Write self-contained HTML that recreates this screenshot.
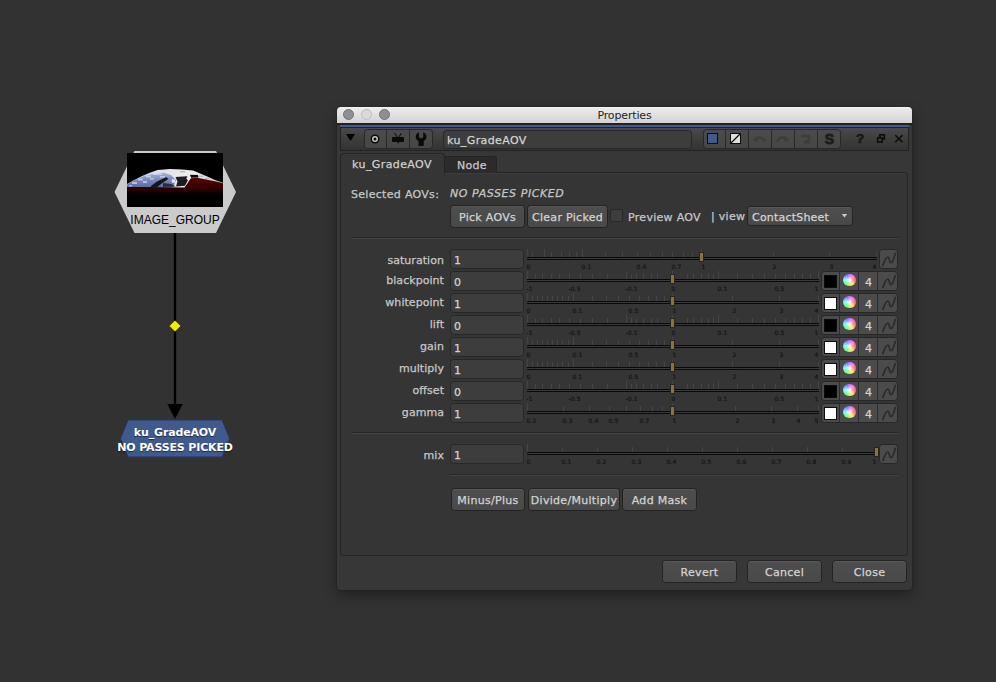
<!DOCTYPE html><html><head><meta charset="utf-8"><title>Properties</title><style>
html,body{margin:0;padding:0;}
body{width:996px;height:682px;background:#323232;overflow:hidden;position:relative;font-family:"DejaVu Sans","Liberation Sans",sans-serif;font-size:11px;letter-spacing:0.3px;color:#c8c8c8;-webkit-text-stroke:0.25px;}
.a{position:absolute;box-sizing:border-box;}
.t{position:absolute;white-space:nowrap;line-height:14px;}
.btn{position:absolute;box-sizing:border-box;background:linear-gradient(#4e4e4e,#494949);border:1px solid #232323;border-radius:3.5px;box-shadow:inset 0 1px 0 #585858;text-align:center;line-height:23px;color:#d4d4d4;white-space:nowrap;}
.fld{position:absolute;box-sizing:border-box;background:#3d3d3d;border:1px solid #272727;border-radius:3.5px;}
.sep{position:absolute;height:1px;background:#454545;border-top:1px solid #262626;box-sizing:content-box;}
.tk{position:absolute;width:1px;background:#454545;}
.tl{position:absolute;font-size:6px;line-height:8px;letter-spacing:0.15px;margin-left:-0.5px;color:#121212;-webkit-text-stroke:0.15px;white-space:nowrap;}
.ib{position:absolute;box-sizing:border-box;background:#4b4b4b;border:1px solid #272727;}
</style></head><body>
<svg class="a" style="left:100px;top:140px" width="160" height="300" viewBox="100 140 160 300">
<polygon points="114.5,192 134.5,151 216,151 236,192 216,233 134.5,233" fill="#cbcbcb"/>
<rect x="127" y="153" width="96" height="54" fill="#000"/>
<defs><linearGradient id="dome" x1="0" y1="0" x2="1" y2="0"><stop offset="0" stop-color="#aab4d4"/><stop offset="0.3" stop-color="#dfe2ea"/><stop offset="0.7" stop-color="#ececec"/><stop offset="1" stop-color="#c9c0c0"/></linearGradient><linearGradient id="blu" x1="0" y1="0" x2="0" y2="1"><stop offset="0" stop-color="#a9b5da"/><stop offset="0.5" stop-color="#7888bf"/><stop offset="1" stop-color="#5a6aa2"/></linearGradient><linearGradient id="red" x1="0" y1="0" x2="0" y2="1"><stop offset="0" stop-color="#540303"/><stop offset="0.5" stop-color="#3e0000"/><stop offset="0.85" stop-color="#200000"/><stop offset="1" stop-color="#000"/></linearGradient></defs>
<path d="M127,184 L133.3,180.4 L142,176 L149.8,172.7 L157.6,170 L169.7,169 L181.9,169.4 L193,170.5 L199.6,173.3 L207.3,176.6 L215,179.9 L223,182.7 L223,188 L127,188 Z" fill="url(#dome)"/>
<path d="M127,184.5 L134,180.7 L142,177 L152,174 L163,172.5 L171,175 L176,180 L173,187.5 L127,187.5 Z" fill="url(#blu)"/>
<path d="M138,178.5 h5 v2 h-5 z M146,175.5 h5 v2 h-5 z M132,182 h5 v2 h-5 z M153,173 h9 v2 h-9 z M143,181 h4 v2 h-4 z M150,178 h4 v1.5 h-4 z M160,176 h5 v1.5 h-5 z M129,185 h3 v1.5 h-3 z" fill="#e3e7f5" opacity="0.6"/>
<path d="M190,174.8 L198,175 L198.5,177.4 L191,177.8 Z" fill="#0a0a0c"/>
<path d="M199,175.5 h4 v1.5 h-4 z M205,178 h4 v1.2 h-4 z M180,171 h5 v1.5 h-5 z" fill="#a9a9b0" opacity="0.7"/>
<path d="M127,187 L150,187 L184.5,187.5 L187,184 L190.7,178.2 L197.3,177.7 L208.4,179.9 L216,181.5 L223,183.2 L223,193.5 L127,193.5 Z" fill="url(#red)"/>
<path d="M151,186 L157,181.5 L166,177.3 L168.5,178.8 L161,184 L157,187.3 L151,187.3 Z" fill="#14151b"/>
<path d="M175.5,177 L187,176.3 L188.3,179.5 L185,185.8 L176,186.4 L177.5,181.5 Z" fill="#1b1b20"/>
<path d="M163,183 L171,184 L176,186.5 L163,187 Z" fill="#2a2c3a"/>
<rect x="171.8" y="179.3" width="3.4" height="3.4" fill="#dfe6ff"/>
<path d="M186,178 L189,176.8 L191,177.2 L188.5,181 Z" fill="#f4f4f4"/>
<rect x="173.850" y="233" width="2.3" height="172" fill="#000"/>
<polygon points="167.3,404 182.7,404 175,419" fill="#000"/>
<polygon points="175,320.5 180.5,326 175,331.5 169.5,326" fill="#f2ec00"/>
</svg>
<div class="t" style="left:115px;width:120px;top:213px;text-align:center;font-family:'Liberation Sans',sans-serif;font-size:12px;letter-spacing:0;-webkit-text-stroke:0;color:#000;">IMAGE_GROUP</div>
<svg class="a" style="left:110px;top:415px" width="130" height="48" viewBox="110 415 130 48">
<polygon points="120.5,438.5 128,420 222,420 229.5,438.5 222,457 128,457" fill="#3f5a8d" stroke="#26375a" stroke-width="1"/>
</svg>
<div class="t" style="left:95px;width:160px;top:425px;text-align:center;font-weight:bold;color:#fff;font-size:11px;line-height:15px;letter-spacing:-0.15px;-webkit-text-stroke:0;text-shadow:0 1px 1px rgba(0,0,0,.55)">ku_GradeAOV<br>NO PASSES PICKED</div>
<div class="a" style="left:337px;top:107px;width:575px;height:483px;background:#373737;border-radius:4px;box-shadow:0 5px 13px rgba(0,0,0,.36),0 0 2px rgba(0,0,0,.35);"></div>
<div class="a" style="left:337px;top:107px;width:575px;height:16px;background:linear-gradient(#f7f7f7 0,#ebebeb 1.5px,#d3d3d3);border-radius:4px 4px 0 0;"></div>
<div class="a" style="left:343.0px;top:109px;width:11px;height:11px;border-radius:50%;background:#8e8e93;border:1px solid #727277;"></div>
<div class="a" style="left:361.0px;top:109px;width:11px;height:11px;border-radius:50%;background:#dadada;border:1px solid #bebebe;"></div>
<div class="a" style="left:379.0px;top:109px;width:11px;height:11px;border-radius:50%;background:#8e8e93;border:1px solid #727277;"></div>
<div class="t" style="left:337px;top:109px;width:575px;text-align:center;font-size:11px;letter-spacing:-0.15px;-webkit-text-stroke:0;color:#262626;">Properties</div>
<div class="a" style="left:337px;top:123px;width:575px;height:2px;background:#222;"></div>
<div class="a" style="left:340px;top:125px;width:569px;height:2px;background:#3f5b8f;"></div>
<div class="a" style="left:340px;top:127px;width:569px;height:24px;background:linear-gradient(#4a4a4a,#3d3d3d 50%,#333333);border:1px solid #232323;"></div>
<svg class="a" style="left:345px;top:133px" width="12" height="10"><polygon points="1,1 10,1 5.5,8" fill="#000"/></svg>
<div class="ib" style="left:364px;top:129px;width:69px;height:20px;border-radius:3.500px;background:linear-gradient(#4b4b4b,#464646);"></div>
<div class="a" style="left:386px;top:130px;width:1px;height:18px;background:#292929;"></div>
<div class="a" style="left:409px;top:130px;width:1px;height:18px;background:#292929;"></div>
<svg class="a" style="left:364px;top:129px" width="69" height="20"><circle cx="11" cy="10" r="4.5" fill="#0a0a0a"/><circle cx="11" cy="10" r="3" fill="#c6c6c6"/><circle cx="11" cy="10" r="1.5" fill="#0a0a0a"/><rect x="28" y="8" width="12" height="5" rx="1" fill="#0a0a0a"/><path d="M30.5,4 L33.5,8.5 M37.5,4 L34.5,8.5" stroke="#0a0a0a" stroke-width="1"/><path d="M33,13 h2.5 l-1.2,1.5 z" fill="#0a0a0a"/><path d="M55,3.2 C50.8,4.8 50.8,10.5 54.5,12 L54.5,17 L59.7,17 L59.7,12 C63.4,10.5 63.4,4.8 59.2,3.2 L59.2,8 L58.3,9.3 L55.9,9.3 L55,8 Z" fill="#0a0a0a"/></svg>
<div class="fld" style="left:443px;top:130px;width:249px;height:19px;"></div>
<div class="t" style="left:447px;top:134px;color:#d4d4d4;letter-spacing:0.4px;">ku_GradeAOV</div>
<div class="ib" style="left:703px;top:129px;width:138px;height:20px;border-radius:3.500px;background:linear-gradient(#4b4b4b,#464646);"></div>
<div class="a" style="left:725px;top:130px;width:1px;height:18px;background:#292929;"></div>
<div class="a" style="left:748px;top:130px;width:1px;height:18px;background:#292929;"></div>
<div class="a" style="left:771px;top:130px;width:1px;height:18px;background:#292929;"></div>
<div class="a" style="left:794px;top:130px;width:1px;height:18px;background:#292929;"></div>
<div class="a" style="left:817px;top:130px;width:1px;height:18px;background:#292929;"></div>
<div class="a" style="left:707px;top:133px;width:11px;height:11px;background:#415a8c;border:1px solid #0c0c0c;"></div>
<svg class="a" style="left:729px;top:132px" width="14" height="14"><rect x="1.5" y="1.5" width="10" height="10" fill="#dedede" stroke="#0c0c0c"/><path d="M2,11 L11,2" stroke="#0c0c0c" stroke-width="1.2"/></svg>
<svg class="a" style="left:748px;top:129px" width="69" height="20" fill="none" stroke="#3d3d3d" stroke-width="2.4"><path d="M7,10.5 C10,7.5 14,7.5 17,12.5" /><path d="M4.5,11 l5,-4 l0,6 z" fill="#3d3d3d" stroke="none"/><path d="M39,10.5 C36,7.5 32,7.5 29,12.5" /><path d="M41.5,11 l-5,-4 l0,6 z" fill="#3d3d3d" stroke="none"/><path d="M53,7 h8 v6 h-3" /><path d="M55,13 l4,-3 l0,6 z" fill="#3d3d3d" stroke="none"/></svg>
<div class="t" style="left:818px;width:23px;top:131px;text-align:center;font-weight:bold;font-size:14px;line-height:16px;letter-spacing:0;color:#1c1c1c;font-family:'Liberation Sans',sans-serif;-webkit-text-stroke:0.9px #1c1c1c;">S</div>
<div class="t" style="left:852px;width:16px;top:131px;text-align:center;font-weight:bold;font-size:13.5px;line-height:16px;letter-spacing:0;color:#181818;font-family:'Liberation Sans',sans-serif;-webkit-text-stroke:0.7px #181818;">?</div>
<svg class="a" style="left:876px;top:133px" width="11" height="11" fill="none" stroke="#0a0a0a" stroke-width="1.5"><rect x="3.9" y="1.8" width="4.5" height="4.2"/><rect x="1.6" y="4.8" width="4.5" height="4.2" fill="#3f3f3f"/></svg>
<svg class="a" style="left:894px;top:134px" width="10" height="10" stroke="#0a0a0a" stroke-width="1.450"><path d="M1.3,1.3 L8.5,8.3 M8.5,1.3 L1.3,8.3"/></svg>
<div class="a" style="left:340px;top:172px;width:568px;height:384px;border:1px solid #242424;border-radius:0 3px 3px 3px;background:#353535;box-shadow:inset 0 1px 0 #3c3c3c;"></div>
<div class="a" style="left:444px;top:156px;width:53px;height:17px;background:#2b2b2b;border:1px solid #242424;border-bottom:none;border-radius:3px 3px 0 0;"></div>
<div class="t" style="left:446px;top:159px;width:52px;text-align:center;color:#c8c8c8;">Node</div>
<div class="a" style="left:340px;top:153px;width:105px;height:21px;background:#353535;border:1px solid #242424;border-bottom:none;border-radius:4px 4px 0 0;box-shadow:inset 0 1px 0 #3c3c3c;"></div>
<div class="t" style="left:340px;top:158px;width:104px;text-align:center;color:#d0d0d0;letter-spacing:0.4px;">ku_GradeAOV</div>
<div class="t" style="left:351px;top:188px;">Selected AOVs:</div>
<div class="t" style="left:450px;top:187px;font-style:italic;letter-spacing:0.57px;">NO PASSES PICKED</div>
<div class="btn" style="left:450px;top:205px;width:75px;height:23px;">Pick AOVs</div>
<div class="btn" style="left:527px;top:205px;width:81px;height:23px;">Clear Picked</div>
<div class="a" style="left:610px;top:209px;width:13px;height:13px;background:#3d3d3d;border:1px solid #282828;border-radius:2px;"></div>
<div class="t" style="left:628px;top:211px;">Preview AOV</div>
<div class="t" style="left:711px;top:210px;">| view</div>
<div class="btn" style="left:747px;top:206px;width:106px;height:20px;"></div>
<div class="t" style="left:752px;top:210.5px;color:#d4d4d4;letter-spacing:0.2px;">ContactSheet</div>
<svg class="a" style="left:841px;top:213px" width="8" height="6"><polygon points="0.8,1 6.2,1 3.5,4.6" fill="#cccccc"/></svg>
<div class="sep" style="left:351px;top:237px;width:547px;"></div>
<div class="sep" style="left:351px;top:432px;width:547px;"></div>
<div class="sep" style="left:450px;top:474px;width:448px;"></div>
<div class="t" style="left:351px;top:254px;width:93px;text-align:right;letter-spacing:0.05px;">saturation</div>
<div class="fld" style="left:450px;top:249px;width:74px;height:20px;"></div>
<div class="t" style="left:454px;top:254px;color:#d4d4d4;">1</div>
<div class="a" style="left:527px;top:257px;width:350px;height:3px;background:#3a3a3a;border-top:1px solid #090909;border-bottom:1px solid #090909;"></div>
<div class="tk" style="left:527px;top:249px;height:8px;"></div>
<div class="tk" style="left:532px;top:252px;height:5px;"></div>
<div class="tk" style="left:544px;top:249px;height:8px;"></div>
<div class="tk" style="left:551px;top:252px;height:5px;"></div>
<div class="tk" style="left:561px;top:252px;height:5px;"></div>
<div class="tk" style="left:569px;top:252px;height:5px;"></div>
<div class="tk" style="left:576px;top:252px;height:5px;"></div>
<div class="tk" style="left:582px;top:249px;height:8px;"></div>
<div class="tk" style="left:605px;top:252px;height:5px;"></div>
<div class="tk" style="left:622px;top:252px;height:5px;"></div>
<div class="tk" style="left:637px;top:252px;height:5px;"></div>
<div class="tk" style="left:650px;top:252px;height:5px;"></div>
<div class="tk" style="left:662px;top:252px;height:5px;"></div>
<div class="tk" style="left:672px;top:252px;height:5px;"></div>
<div class="tk" style="left:683px;top:252px;height:5px;"></div>
<div class="tk" style="left:692px;top:252px;height:5px;"></div>
<div class="tk" style="left:701px;top:249px;height:8px;"></div>
<div class="tk" style="left:773px;top:252px;height:5px;"></div>
<div class="tk" style="left:829px;top:252px;height:5px;"></div>
<div class="tk" style="left:876px;top:252px;height:5px;"></div>
<div class="tl" style="left:527px;top:263px;">0</div>
<div class="tl" style="left:582px;top:263px;">0.1</div>
<div class="tl" style="left:637px;top:263px;">0.4</div>
<div class="tl" style="left:672px;top:263px;">0.7</div>
<div class="tl" style="left:702px;top:263px;">1</div>
<div class="tl" style="left:773px;top:263px;">2</div>
<div class="tl" style="left:830px;top:263px;">3</div>
<div class="tl" style="left:857px;width:20px;text-align:right;top:263px;">4</div>
<div class="a" style="left:699px;top:252px;width:5px;height:10px;background:#88723d;border:1px solid #2a2519;"></div>
<div class="ib" style="left:879px;top:249px;width:19px;height:20px;border-radius:3.500px;"></div>
<svg class="a" style="left:879px;top:249px" width="20" height="21" fill="none" stroke="#2a2a2a" stroke-width="1.7" stroke-linecap="round"><path d="M3.8,16.6 C5.2,13.5 6.6,8 8.8,8 C11,8 9.8,13.6 12,13.6 C14.2,13.6 15.4,7 16.3,4.5"/></svg>
<div class="t" style="left:351px;top:273.5px;width:93px;text-align:right;letter-spacing:0.05px;">blackpoint</div>
<div class="fld" style="left:450px;top:271px;width:74px;height:20px;"></div>
<div class="t" style="left:454px;top:276px;color:#d4d4d4;">0</div>
<div class="a" style="left:527px;top:279px;width:292px;height:3px;background:#3a3a3a;border-top:1px solid #090909;border-bottom:1px solid #090909;"></div>
<div class="tk" style="left:527px;top:271px;height:8px;"></div>
<div class="tk" style="left:535px;top:274px;height:5px;"></div>
<div class="tk" style="left:542px;top:274px;height:5px;"></div>
<div class="tk" style="left:551px;top:274px;height:5px;"></div>
<div class="tk" style="left:559px;top:274px;height:5px;"></div>
<div class="tk" style="left:569px;top:274px;height:5px;"></div>
<div class="tk" style="left:580px;top:274px;height:5px;"></div>
<div class="tk" style="left:592px;top:274px;height:5px;"></div>
<div class="tk" style="left:607px;top:274px;height:5px;"></div>
<div class="tk" style="left:626px;top:271px;height:8px;"></div>
<div class="tk" style="left:631px;top:274px;height:5px;"></div>
<div class="tk" style="left:636px;top:274px;height:5px;"></div>
<div class="tk" style="left:643px;top:274px;height:5px;"></div>
<div class="tk" style="left:651px;top:274px;height:5px;"></div>
<div class="tk" style="left:657px;top:274px;height:5px;"></div>
<div class="tk" style="left:672px;top:271px;height:8px;"></div>
<div class="tk" style="left:687px;top:274px;height:5px;"></div>
<div class="tk" style="left:693px;top:274px;height:5px;"></div>
<div class="tk" style="left:701px;top:274px;height:5px;"></div>
<div class="tk" style="left:708px;top:274px;height:5px;"></div>
<div class="tk" style="left:713px;top:274px;height:5px;"></div>
<div class="tk" style="left:718px;top:271px;height:8px;"></div>
<div class="tk" style="left:737px;top:274px;height:5px;"></div>
<div class="tk" style="left:752px;top:274px;height:5px;"></div>
<div class="tk" style="left:764px;top:274px;height:5px;"></div>
<div class="tk" style="left:775px;top:274px;height:5px;"></div>
<div class="tk" style="left:785px;top:274px;height:5px;"></div>
<div class="tk" style="left:794px;top:274px;height:5px;"></div>
<div class="tk" style="left:802px;top:274px;height:5px;"></div>
<div class="tk" style="left:810px;top:274px;height:5px;"></div>
<div class="tk" style="left:818px;top:271px;height:8px;"></div>
<div class="tl" style="left:527px;top:285px;">-1</div>
<div class="tl" style="left:569px;top:285px;">-0.5</div>
<div class="tl" style="left:626px;top:285px;">-0.1</div>
<div class="tl" style="left:672px;top:285px;">0</div>
<div class="tl" style="left:718px;top:285px;">0.1</div>
<div class="tl" style="left:775px;top:285px;">0.5</div>
<div class="tl" style="left:799px;width:20px;text-align:right;top:285px;">1</div>
<div class="a" style="left:670px;top:274px;width:5px;height:10px;background:#88723d;border:1px solid #2a2519;"></div>
<div class="ib" style="left:821px;top:271px;width:77px;height:20px;border-radius:3.500px;"></div>
<div class="a" style="left:839px;top:272px;width:1px;height:18px;background:#2c2c2c;"></div>
<div class="a" style="left:858px;top:272px;width:1px;height:18px;background:#2c2c2c;"></div>
<div class="a" style="left:877px;top:272px;width:1px;height:18px;background:#2c2c2c;"></div>
<div class="a" style="left:824px;top:275px;width:13px;height:13px;background:#000;border:1px solid #0c0c0c;"></div>
<div class="a" style="left:843.4px;top:274.2px;width:12.2px;height:12.2px;border-radius:50%;background:radial-gradient(circle at 50% 50%,#fff 0%,rgba(255,255,255,0.42) 45%,rgba(255,255,255,0) 100%),conic-gradient(from 90deg,#ff3030,#ffe030,#30ff30,#30ffff,#4040ff,#ff30ff,#ff3030);"></div>
<div class="t" style="left:859px;top:276px;width:19px;text-align:center;font-size:11px;letter-spacing:0;color:#d4d4d4;">4</div>
<svg class="a" style="left:879px;top:271px" width="20" height="21" fill="none" stroke="#2a2a2a" stroke-width="1.7" stroke-linecap="round"><path d="M3.8,16.6 C5.2,13.5 6.6,8 8.8,8 C11,8 9.8,13.6 12,13.6 C14.2,13.6 15.4,7 16.3,4.5"/></svg>
<div class="t" style="left:351px;top:295.5px;width:93px;text-align:right;letter-spacing:0.05px;">whitepoint</div>
<div class="fld" style="left:450px;top:293px;width:74px;height:20px;"></div>
<div class="t" style="left:454px;top:298px;color:#d4d4d4;">1</div>
<div class="a" style="left:527px;top:301px;width:292px;height:3px;background:#3a3a3a;border-top:1px solid #090909;border-bottom:1px solid #090909;"></div>
<div class="tk" style="left:527px;top:293px;height:8px;"></div>
<div class="tk" style="left:532px;top:296px;height:5px;"></div>
<div class="tk" style="left:537px;top:296px;height:5px;"></div>
<div class="tk" style="left:542px;top:296px;height:5px;"></div>
<div class="tk" style="left:547px;top:296px;height:5px;"></div>
<div class="tk" style="left:552px;top:296px;height:5px;"></div>
<div class="tk" style="left:557px;top:296px;height:5px;"></div>
<div class="tk" style="left:562px;top:296px;height:5px;"></div>
<div class="tk" style="left:568px;top:296px;height:5px;"></div>
<div class="tk" style="left:573px;top:293px;height:8px;"></div>
<div class="tk" style="left:592px;top:296px;height:5px;"></div>
<div class="tk" style="left:606px;top:296px;height:5px;"></div>
<div class="tk" style="left:618px;top:296px;height:5px;"></div>
<div class="tk" style="left:629px;top:296px;height:5px;"></div>
<div class="tk" style="left:639px;top:296px;height:5px;"></div>
<div class="tk" style="left:648px;top:296px;height:5px;"></div>
<div class="tk" style="left:656px;top:296px;height:5px;"></div>
<div class="tk" style="left:664px;top:296px;height:5px;"></div>
<div class="tk" style="left:672px;top:293px;height:8px;"></div>
<div class="tk" style="left:732px;top:296px;height:5px;"></div>
<div class="tk" style="left:779px;top:296px;height:5px;"></div>
<div class="tk" style="left:818px;top:296px;height:5px;"></div>
<div class="tl" style="left:527px;top:307px;">0</div>
<div class="tl" style="left:573px;top:307px;">0.1</div>
<div class="tl" style="left:629px;top:307px;">0.5</div>
<div class="tl" style="left:673px;top:307px;">1</div>
<div class="tl" style="left:733px;top:307px;">2</div>
<div class="tl" style="left:780px;top:307px;">3</div>
<div class="tl" style="left:799px;width:20px;text-align:right;top:307px;">4</div>
<div class="a" style="left:670px;top:296px;width:5px;height:10px;background:#88723d;border:1px solid #2a2519;"></div>
<div class="ib" style="left:821px;top:293px;width:77px;height:20px;border-radius:3.500px;"></div>
<div class="a" style="left:839px;top:294px;width:1px;height:18px;background:#2c2c2c;"></div>
<div class="a" style="left:858px;top:294px;width:1px;height:18px;background:#2c2c2c;"></div>
<div class="a" style="left:877px;top:294px;width:1px;height:18px;background:#2c2c2c;"></div>
<div class="a" style="left:824px;top:297px;width:13px;height:13px;background:#fff;border:1px solid #0c0c0c;"></div>
<div class="a" style="left:843.4px;top:296.2px;width:12.2px;height:12.2px;border-radius:50%;background:radial-gradient(circle at 50% 50%,#fff 0%,rgba(255,255,255,0.42) 45%,rgba(255,255,255,0) 100%),conic-gradient(from 90deg,#ff3030,#ffe030,#30ff30,#30ffff,#4040ff,#ff30ff,#ff3030);"></div>
<div class="t" style="left:859px;top:298px;width:19px;text-align:center;font-size:11px;letter-spacing:0;color:#d4d4d4;">4</div>
<svg class="a" style="left:879px;top:293px" width="20" height="21" fill="none" stroke="#2a2a2a" stroke-width="1.7" stroke-linecap="round"><path d="M3.8,16.6 C5.2,13.5 6.6,8 8.8,8 C11,8 9.8,13.6 12,13.6 C14.2,13.6 15.4,7 16.3,4.5"/></svg>
<div class="t" style="left:351px;top:317.5px;width:93px;text-align:right;letter-spacing:0.05px;">lift</div>
<div class="fld" style="left:450px;top:315px;width:74px;height:20px;"></div>
<div class="t" style="left:454px;top:320px;color:#d4d4d4;">0</div>
<div class="a" style="left:527px;top:323px;width:292px;height:3px;background:#3a3a3a;border-top:1px solid #090909;border-bottom:1px solid #090909;"></div>
<div class="tk" style="left:527px;top:315px;height:8px;"></div>
<div class="tk" style="left:535px;top:318px;height:5px;"></div>
<div class="tk" style="left:542px;top:318px;height:5px;"></div>
<div class="tk" style="left:551px;top:318px;height:5px;"></div>
<div class="tk" style="left:559px;top:318px;height:5px;"></div>
<div class="tk" style="left:569px;top:318px;height:5px;"></div>
<div class="tk" style="left:580px;top:318px;height:5px;"></div>
<div class="tk" style="left:592px;top:318px;height:5px;"></div>
<div class="tk" style="left:607px;top:318px;height:5px;"></div>
<div class="tk" style="left:626px;top:315px;height:8px;"></div>
<div class="tk" style="left:631px;top:318px;height:5px;"></div>
<div class="tk" style="left:636px;top:318px;height:5px;"></div>
<div class="tk" style="left:643px;top:318px;height:5px;"></div>
<div class="tk" style="left:651px;top:318px;height:5px;"></div>
<div class="tk" style="left:657px;top:318px;height:5px;"></div>
<div class="tk" style="left:672px;top:315px;height:8px;"></div>
<div class="tk" style="left:687px;top:318px;height:5px;"></div>
<div class="tk" style="left:693px;top:318px;height:5px;"></div>
<div class="tk" style="left:701px;top:318px;height:5px;"></div>
<div class="tk" style="left:708px;top:318px;height:5px;"></div>
<div class="tk" style="left:713px;top:318px;height:5px;"></div>
<div class="tk" style="left:718px;top:315px;height:8px;"></div>
<div class="tk" style="left:737px;top:318px;height:5px;"></div>
<div class="tk" style="left:752px;top:318px;height:5px;"></div>
<div class="tk" style="left:764px;top:318px;height:5px;"></div>
<div class="tk" style="left:775px;top:318px;height:5px;"></div>
<div class="tk" style="left:785px;top:318px;height:5px;"></div>
<div class="tk" style="left:794px;top:318px;height:5px;"></div>
<div class="tk" style="left:802px;top:318px;height:5px;"></div>
<div class="tk" style="left:810px;top:318px;height:5px;"></div>
<div class="tk" style="left:818px;top:315px;height:8px;"></div>
<div class="tl" style="left:527px;top:329px;">-1</div>
<div class="tl" style="left:569px;top:329px;">-0.5</div>
<div class="tl" style="left:626px;top:329px;">-0.1</div>
<div class="tl" style="left:672px;top:329px;">0</div>
<div class="tl" style="left:718px;top:329px;">0.1</div>
<div class="tl" style="left:775px;top:329px;">0.5</div>
<div class="tl" style="left:799px;width:20px;text-align:right;top:329px;">1</div>
<div class="a" style="left:670px;top:318px;width:5px;height:10px;background:#88723d;border:1px solid #2a2519;"></div>
<div class="ib" style="left:821px;top:315px;width:77px;height:20px;border-radius:3.500px;"></div>
<div class="a" style="left:839px;top:316px;width:1px;height:18px;background:#2c2c2c;"></div>
<div class="a" style="left:858px;top:316px;width:1px;height:18px;background:#2c2c2c;"></div>
<div class="a" style="left:877px;top:316px;width:1px;height:18px;background:#2c2c2c;"></div>
<div class="a" style="left:824px;top:319px;width:13px;height:13px;background:#000;border:1px solid #0c0c0c;"></div>
<div class="a" style="left:843.4px;top:318.2px;width:12.2px;height:12.2px;border-radius:50%;background:radial-gradient(circle at 50% 50%,#fff 0%,rgba(255,255,255,0.42) 45%,rgba(255,255,255,0) 100%),conic-gradient(from 90deg,#ff3030,#ffe030,#30ff30,#30ffff,#4040ff,#ff30ff,#ff3030);"></div>
<div class="t" style="left:859px;top:320px;width:19px;text-align:center;font-size:11px;letter-spacing:0;color:#d4d4d4;">4</div>
<svg class="a" style="left:879px;top:315px" width="20" height="21" fill="none" stroke="#2a2a2a" stroke-width="1.7" stroke-linecap="round"><path d="M3.8,16.6 C5.2,13.5 6.6,8 8.8,8 C11,8 9.8,13.6 12,13.6 C14.2,13.6 15.4,7 16.3,4.5"/></svg>
<div class="t" style="left:351px;top:339.5px;width:93px;text-align:right;letter-spacing:0.05px;">gain</div>
<div class="fld" style="left:450px;top:337px;width:74px;height:20px;"></div>
<div class="t" style="left:454px;top:342px;color:#d4d4d4;">1</div>
<div class="a" style="left:527px;top:345px;width:292px;height:3px;background:#3a3a3a;border-top:1px solid #090909;border-bottom:1px solid #090909;"></div>
<div class="tk" style="left:527px;top:337px;height:8px;"></div>
<div class="tk" style="left:532px;top:340px;height:5px;"></div>
<div class="tk" style="left:537px;top:340px;height:5px;"></div>
<div class="tk" style="left:542px;top:340px;height:5px;"></div>
<div class="tk" style="left:547px;top:340px;height:5px;"></div>
<div class="tk" style="left:552px;top:340px;height:5px;"></div>
<div class="tk" style="left:557px;top:340px;height:5px;"></div>
<div class="tk" style="left:562px;top:340px;height:5px;"></div>
<div class="tk" style="left:568px;top:340px;height:5px;"></div>
<div class="tk" style="left:573px;top:337px;height:8px;"></div>
<div class="tk" style="left:592px;top:340px;height:5px;"></div>
<div class="tk" style="left:606px;top:340px;height:5px;"></div>
<div class="tk" style="left:618px;top:340px;height:5px;"></div>
<div class="tk" style="left:629px;top:340px;height:5px;"></div>
<div class="tk" style="left:639px;top:340px;height:5px;"></div>
<div class="tk" style="left:648px;top:340px;height:5px;"></div>
<div class="tk" style="left:656px;top:340px;height:5px;"></div>
<div class="tk" style="left:664px;top:340px;height:5px;"></div>
<div class="tk" style="left:672px;top:337px;height:8px;"></div>
<div class="tk" style="left:732px;top:340px;height:5px;"></div>
<div class="tk" style="left:779px;top:340px;height:5px;"></div>
<div class="tk" style="left:818px;top:340px;height:5px;"></div>
<div class="tl" style="left:527px;top:351px;">0</div>
<div class="tl" style="left:573px;top:351px;">0.1</div>
<div class="tl" style="left:629px;top:351px;">0.5</div>
<div class="tl" style="left:673px;top:351px;">1</div>
<div class="tl" style="left:733px;top:351px;">2</div>
<div class="tl" style="left:780px;top:351px;">3</div>
<div class="tl" style="left:799px;width:20px;text-align:right;top:351px;">4</div>
<div class="a" style="left:670px;top:340px;width:5px;height:10px;background:#88723d;border:1px solid #2a2519;"></div>
<div class="ib" style="left:821px;top:337px;width:77px;height:20px;border-radius:3.500px;"></div>
<div class="a" style="left:839px;top:338px;width:1px;height:18px;background:#2c2c2c;"></div>
<div class="a" style="left:858px;top:338px;width:1px;height:18px;background:#2c2c2c;"></div>
<div class="a" style="left:877px;top:338px;width:1px;height:18px;background:#2c2c2c;"></div>
<div class="a" style="left:824px;top:341px;width:13px;height:13px;background:#fff;border:1px solid #0c0c0c;"></div>
<div class="a" style="left:843.4px;top:340.2px;width:12.2px;height:12.2px;border-radius:50%;background:radial-gradient(circle at 50% 50%,#fff 0%,rgba(255,255,255,0.42) 45%,rgba(255,255,255,0) 100%),conic-gradient(from 90deg,#ff3030,#ffe030,#30ff30,#30ffff,#4040ff,#ff30ff,#ff3030);"></div>
<div class="t" style="left:859px;top:342px;width:19px;text-align:center;font-size:11px;letter-spacing:0;color:#d4d4d4;">4</div>
<svg class="a" style="left:879px;top:337px" width="20" height="21" fill="none" stroke="#2a2a2a" stroke-width="1.7" stroke-linecap="round"><path d="M3.8,16.6 C5.2,13.5 6.6,8 8.8,8 C11,8 9.8,13.6 12,13.6 C14.2,13.6 15.4,7 16.3,4.5"/></svg>
<div class="t" style="left:351px;top:361.5px;width:93px;text-align:right;letter-spacing:0.05px;">multiply</div>
<div class="fld" style="left:450px;top:359px;width:74px;height:20px;"></div>
<div class="t" style="left:454px;top:364px;color:#d4d4d4;">1</div>
<div class="a" style="left:527px;top:367px;width:292px;height:3px;background:#3a3a3a;border-top:1px solid #090909;border-bottom:1px solid #090909;"></div>
<div class="tk" style="left:527px;top:359px;height:8px;"></div>
<div class="tk" style="left:532px;top:362px;height:5px;"></div>
<div class="tk" style="left:537px;top:362px;height:5px;"></div>
<div class="tk" style="left:542px;top:362px;height:5px;"></div>
<div class="tk" style="left:547px;top:362px;height:5px;"></div>
<div class="tk" style="left:552px;top:362px;height:5px;"></div>
<div class="tk" style="left:557px;top:362px;height:5px;"></div>
<div class="tk" style="left:562px;top:362px;height:5px;"></div>
<div class="tk" style="left:568px;top:362px;height:5px;"></div>
<div class="tk" style="left:573px;top:359px;height:8px;"></div>
<div class="tk" style="left:592px;top:362px;height:5px;"></div>
<div class="tk" style="left:606px;top:362px;height:5px;"></div>
<div class="tk" style="left:618px;top:362px;height:5px;"></div>
<div class="tk" style="left:629px;top:362px;height:5px;"></div>
<div class="tk" style="left:639px;top:362px;height:5px;"></div>
<div class="tk" style="left:648px;top:362px;height:5px;"></div>
<div class="tk" style="left:656px;top:362px;height:5px;"></div>
<div class="tk" style="left:664px;top:362px;height:5px;"></div>
<div class="tk" style="left:672px;top:359px;height:8px;"></div>
<div class="tk" style="left:732px;top:362px;height:5px;"></div>
<div class="tk" style="left:779px;top:362px;height:5px;"></div>
<div class="tk" style="left:818px;top:362px;height:5px;"></div>
<div class="tl" style="left:527px;top:373px;">0</div>
<div class="tl" style="left:573px;top:373px;">0.1</div>
<div class="tl" style="left:629px;top:373px;">0.5</div>
<div class="tl" style="left:673px;top:373px;">1</div>
<div class="tl" style="left:733px;top:373px;">2</div>
<div class="tl" style="left:780px;top:373px;">3</div>
<div class="tl" style="left:799px;width:20px;text-align:right;top:373px;">4</div>
<div class="a" style="left:670px;top:362px;width:5px;height:10px;background:#88723d;border:1px solid #2a2519;"></div>
<div class="ib" style="left:821px;top:359px;width:77px;height:20px;border-radius:3.500px;"></div>
<div class="a" style="left:839px;top:360px;width:1px;height:18px;background:#2c2c2c;"></div>
<div class="a" style="left:858px;top:360px;width:1px;height:18px;background:#2c2c2c;"></div>
<div class="a" style="left:877px;top:360px;width:1px;height:18px;background:#2c2c2c;"></div>
<div class="a" style="left:824px;top:363px;width:13px;height:13px;background:#fff;border:1px solid #0c0c0c;"></div>
<div class="a" style="left:843.4px;top:362.2px;width:12.2px;height:12.2px;border-radius:50%;background:radial-gradient(circle at 50% 50%,#fff 0%,rgba(255,255,255,0.42) 45%,rgba(255,255,255,0) 100%),conic-gradient(from 90deg,#ff3030,#ffe030,#30ff30,#30ffff,#4040ff,#ff30ff,#ff3030);"></div>
<div class="t" style="left:859px;top:364px;width:19px;text-align:center;font-size:11px;letter-spacing:0;color:#d4d4d4;">4</div>
<svg class="a" style="left:879px;top:359px" width="20" height="21" fill="none" stroke="#2a2a2a" stroke-width="1.7" stroke-linecap="round"><path d="M3.8,16.6 C5.2,13.5 6.6,8 8.8,8 C11,8 9.8,13.6 12,13.6 C14.2,13.6 15.4,7 16.3,4.5"/></svg>
<div class="t" style="left:351px;top:383.5px;width:93px;text-align:right;letter-spacing:0.05px;">offset</div>
<div class="fld" style="left:450px;top:381px;width:74px;height:20px;"></div>
<div class="t" style="left:454px;top:386px;color:#d4d4d4;">0</div>
<div class="a" style="left:527px;top:389px;width:292px;height:3px;background:#3a3a3a;border-top:1px solid #090909;border-bottom:1px solid #090909;"></div>
<div class="tk" style="left:527px;top:381px;height:8px;"></div>
<div class="tk" style="left:535px;top:384px;height:5px;"></div>
<div class="tk" style="left:542px;top:384px;height:5px;"></div>
<div class="tk" style="left:551px;top:384px;height:5px;"></div>
<div class="tk" style="left:559px;top:384px;height:5px;"></div>
<div class="tk" style="left:569px;top:384px;height:5px;"></div>
<div class="tk" style="left:580px;top:384px;height:5px;"></div>
<div class="tk" style="left:592px;top:384px;height:5px;"></div>
<div class="tk" style="left:607px;top:384px;height:5px;"></div>
<div class="tk" style="left:626px;top:381px;height:8px;"></div>
<div class="tk" style="left:631px;top:384px;height:5px;"></div>
<div class="tk" style="left:636px;top:384px;height:5px;"></div>
<div class="tk" style="left:643px;top:384px;height:5px;"></div>
<div class="tk" style="left:651px;top:384px;height:5px;"></div>
<div class="tk" style="left:657px;top:384px;height:5px;"></div>
<div class="tk" style="left:672px;top:381px;height:8px;"></div>
<div class="tk" style="left:687px;top:384px;height:5px;"></div>
<div class="tk" style="left:693px;top:384px;height:5px;"></div>
<div class="tk" style="left:701px;top:384px;height:5px;"></div>
<div class="tk" style="left:708px;top:384px;height:5px;"></div>
<div class="tk" style="left:713px;top:384px;height:5px;"></div>
<div class="tk" style="left:718px;top:381px;height:8px;"></div>
<div class="tk" style="left:737px;top:384px;height:5px;"></div>
<div class="tk" style="left:752px;top:384px;height:5px;"></div>
<div class="tk" style="left:764px;top:384px;height:5px;"></div>
<div class="tk" style="left:775px;top:384px;height:5px;"></div>
<div class="tk" style="left:785px;top:384px;height:5px;"></div>
<div class="tk" style="left:794px;top:384px;height:5px;"></div>
<div class="tk" style="left:802px;top:384px;height:5px;"></div>
<div class="tk" style="left:810px;top:384px;height:5px;"></div>
<div class="tk" style="left:818px;top:381px;height:8px;"></div>
<div class="tl" style="left:527px;top:395px;">-1</div>
<div class="tl" style="left:569px;top:395px;">-0.5</div>
<div class="tl" style="left:626px;top:395px;">-0.1</div>
<div class="tl" style="left:672px;top:395px;">0</div>
<div class="tl" style="left:718px;top:395px;">0.1</div>
<div class="tl" style="left:775px;top:395px;">0.5</div>
<div class="tl" style="left:799px;width:20px;text-align:right;top:395px;">1</div>
<div class="a" style="left:670px;top:384px;width:5px;height:10px;background:#88723d;border:1px solid #2a2519;"></div>
<div class="ib" style="left:821px;top:381px;width:77px;height:20px;border-radius:3.500px;"></div>
<div class="a" style="left:839px;top:382px;width:1px;height:18px;background:#2c2c2c;"></div>
<div class="a" style="left:858px;top:382px;width:1px;height:18px;background:#2c2c2c;"></div>
<div class="a" style="left:877px;top:382px;width:1px;height:18px;background:#2c2c2c;"></div>
<div class="a" style="left:824px;top:385px;width:13px;height:13px;background:#000;border:1px solid #0c0c0c;"></div>
<div class="a" style="left:843.4px;top:384.2px;width:12.2px;height:12.2px;border-radius:50%;background:radial-gradient(circle at 50% 50%,#fff 0%,rgba(255,255,255,0.42) 45%,rgba(255,255,255,0) 100%),conic-gradient(from 90deg,#ff3030,#ffe030,#30ff30,#30ffff,#4040ff,#ff30ff,#ff3030);"></div>
<div class="t" style="left:859px;top:386px;width:19px;text-align:center;font-size:11px;letter-spacing:0;color:#d4d4d4;">4</div>
<svg class="a" style="left:879px;top:381px" width="20" height="21" fill="none" stroke="#2a2a2a" stroke-width="1.7" stroke-linecap="round"><path d="M3.8,16.6 C5.2,13.5 6.6,8 8.8,8 C11,8 9.8,13.6 12,13.6 C14.2,13.6 15.4,7 16.3,4.5"/></svg>
<div class="t" style="left:351px;top:405.5px;width:93px;text-align:right;letter-spacing:0.05px;">gamma</div>
<div class="fld" style="left:450px;top:403px;width:74px;height:20px;"></div>
<div class="t" style="left:454px;top:408px;color:#d4d4d4;">1</div>
<div class="a" style="left:527px;top:411px;width:292px;height:3px;background:#3a3a3a;border-top:1px solid #090909;border-bottom:1px solid #090909;"></div>
<div class="tk" style="left:527px;top:403px;height:8px;"></div>
<div class="tk" style="left:563px;top:406px;height:5px;"></div>
<div class="tk" style="left:589px;top:406px;height:5px;"></div>
<div class="tk" style="left:609px;top:406px;height:5px;"></div>
<div class="tk" style="left:626px;top:406px;height:5px;"></div>
<div class="tk" style="left:640px;top:406px;height:5px;"></div>
<div class="tk" style="left:652px;top:406px;height:5px;"></div>
<div class="tk" style="left:662px;top:406px;height:5px;"></div>
<div class="tk" style="left:672px;top:403px;height:8px;"></div>
<div class="tk" style="left:735px;top:406px;height:5px;"></div>
<div class="tk" style="left:771px;top:406px;height:5px;"></div>
<div class="tk" style="left:797px;top:406px;height:5px;"></div>
<div class="tk" style="left:818px;top:406px;height:5px;"></div>
<div class="tl" style="left:527px;top:417px;">0.2</div>
<div class="tl" style="left:563px;top:417px;">0.3</div>
<div class="tl" style="left:589px;top:417px;">0.4</div>
<div class="tl" style="left:609px;top:417px;">0.5</div>
<div class="tl" style="left:640px;top:417px;">0.7</div>
<div class="tl" style="left:673px;top:417px;">1</div>
<div class="tl" style="left:736px;top:417px;">2</div>
<div class="tl" style="left:772px;top:417px;">3</div>
<div class="tl" style="left:797px;top:417px;">4</div>
<div class="tl" style="left:799px;width:20px;text-align:right;top:417px;">5</div>
<div class="a" style="left:670px;top:406px;width:5px;height:10px;background:#88723d;border:1px solid #2a2519;"></div>
<div class="ib" style="left:821px;top:403px;width:77px;height:20px;border-radius:3.500px;"></div>
<div class="a" style="left:839px;top:404px;width:1px;height:18px;background:#2c2c2c;"></div>
<div class="a" style="left:858px;top:404px;width:1px;height:18px;background:#2c2c2c;"></div>
<div class="a" style="left:877px;top:404px;width:1px;height:18px;background:#2c2c2c;"></div>
<div class="a" style="left:824px;top:407px;width:13px;height:13px;background:#fff;border:1px solid #0c0c0c;"></div>
<div class="a" style="left:843.4px;top:406.2px;width:12.2px;height:12.2px;border-radius:50%;background:radial-gradient(circle at 50% 50%,#fff 0%,rgba(255,255,255,0.42) 45%,rgba(255,255,255,0) 100%),conic-gradient(from 90deg,#ff3030,#ffe030,#30ff30,#30ffff,#4040ff,#ff30ff,#ff3030);"></div>
<div class="t" style="left:859px;top:408px;width:19px;text-align:center;font-size:11px;letter-spacing:0;color:#d4d4d4;">4</div>
<svg class="a" style="left:879px;top:403px" width="20" height="21" fill="none" stroke="#2a2a2a" stroke-width="1.7" stroke-linecap="round"><path d="M3.8,16.6 C5.2,13.5 6.6,8 8.8,8 C11,8 9.8,13.6 12,13.6 C14.2,13.6 15.4,7 16.3,4.5"/></svg>
<div class="t" style="left:351px;top:449px;width:93px;text-align:right;letter-spacing:0.05px;">mix</div>
<div class="fld" style="left:450px;top:444px;width:74px;height:20px;"></div>
<div class="t" style="left:454px;top:449px;color:#d4d4d4;">1</div>
<div class="a" style="left:527px;top:452px;width:350px;height:3px;background:#3a3a3a;border-top:1px solid #090909;border-bottom:1px solid #090909;"></div>
<div class="tk" style="left:527px;top:444px;height:8px;"></div>
<div class="tk" style="left:562px;top:447px;height:5px;"></div>
<div class="tk" style="left:597px;top:447px;height:5px;"></div>
<div class="tk" style="left:632px;top:447px;height:5px;"></div>
<div class="tk" style="left:667px;top:447px;height:5px;"></div>
<div class="tk" style="left:702px;top:447px;height:5px;"></div>
<div class="tk" style="left:737px;top:447px;height:5px;"></div>
<div class="tk" style="left:772px;top:447px;height:5px;"></div>
<div class="tk" style="left:807px;top:447px;height:5px;"></div>
<div class="tk" style="left:842px;top:447px;height:5px;"></div>
<div class="tk" style="left:876px;top:447px;height:5px;"></div>
<div class="tl" style="left:527px;top:458px;">0</div>
<div class="tl" style="left:562px;top:458px;">0.1</div>
<div class="tl" style="left:597px;top:458px;">0.2</div>
<div class="tl" style="left:632px;top:458px;">0.3</div>
<div class="tl" style="left:667px;top:458px;">0.4</div>
<div class="tl" style="left:702px;top:458px;">0.5</div>
<div class="tl" style="left:737px;top:458px;">0.6</div>
<div class="tl" style="left:772px;top:458px;">0.7</div>
<div class="tl" style="left:807px;top:458px;">0.8</div>
<div class="tl" style="left:842px;top:458px;">0.9</div>
<div class="tl" style="left:857px;width:20px;text-align:right;top:458px;">1</div>
<div class="a" style="left:874px;top:447px;width:5px;height:10px;background:#88723d;border:1px solid #2a2519;"></div>
<div class="ib" style="left:879px;top:444px;width:19px;height:20px;border-radius:3.500px;"></div>
<svg class="a" style="left:879px;top:444px" width="20" height="21" fill="none" stroke="#2a2a2a" stroke-width="1.7" stroke-linecap="round"><path d="M3.8,16.6 C5.2,13.5 6.6,8 8.8,8 C11,8 9.8,13.6 12,13.6 C14.2,13.6 15.4,7 16.3,4.5"/></svg>
<div class="btn" style="left:451px;top:488px;width:74px;height:23px;">Minus/Plus</div>
<div class="btn" style="left:528px;top:488px;width:92px;height:23px;">Divide/Multiply</div>
<div class="btn" style="left:622px;top:488px;width:75px;height:23px;">Add Mask</div>
<div class="btn" style="left:662px;top:560px;width:75px;height:23px;">Revert</div>
<div class="btn" style="left:747px;top:560px;width:75px;height:23px;">Cancel</div>
<div class="btn" style="left:832px;top:560px;width:75px;height:23px;">Close</div>
</body></html>
